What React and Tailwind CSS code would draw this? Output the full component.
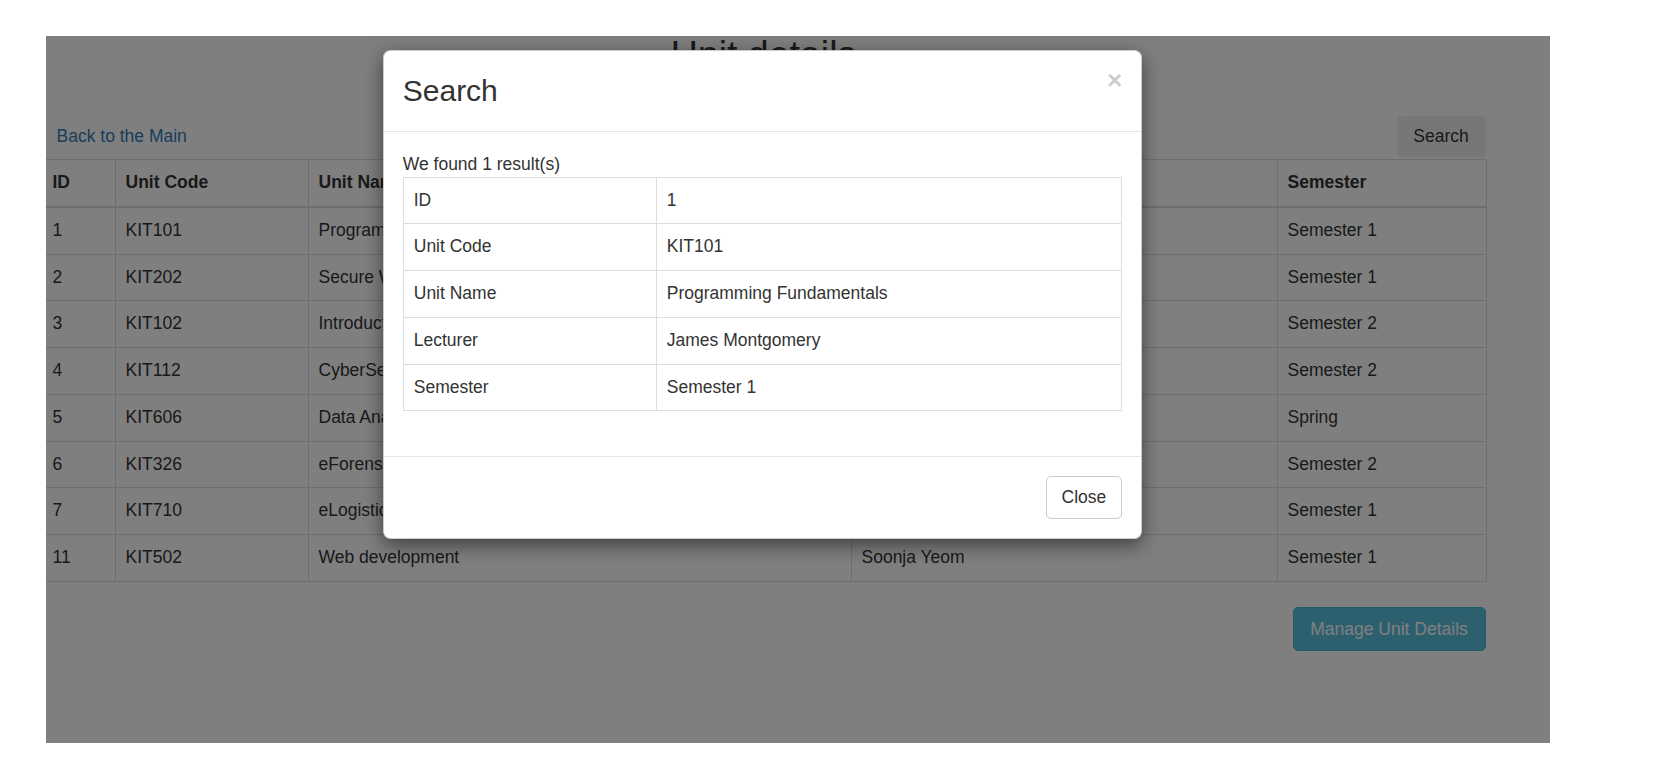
import React from 'react';

const units = [
    { id: 1, code: 'KIT101', name: 'Programming Fundamentals', lecturer: 'James Montgomery', semester: 'Semester 1' },
    { id: 2, code: 'KIT202', name: 'Secure Web Programming', lecturer: 'Soonja Yeom', semester: 'Semester 1' },
    { id: 3, code: 'KIT102', name: 'Introduction to Data Science', lecturer: 'Mira Park', semester: 'Semester 2' },
    { id: 4, code: 'KIT112', name: 'CyberSecurity Fundamentals', lecturer: 'Joel Scanlan', semester: 'Semester 2' },
    { id: 5, code: 'KIT606', name: 'Data Analytics', lecturer: 'Son Tran', semester: 'Spring' },
    { id: 6, code: 'KIT326', name: 'eForensics', lecturer: 'Joel Scanlan', semester: 'Semester 2' },
    { id: 7, code: 'KIT710', name: 'eLogistics', lecturer: 'Jacob Lin', semester: 'Semester 1' },
    { id: 11, code: 'KIT502', name: 'Web development', lecturer: 'Soonja Yeom', semester: 'Semester 1' },
];

const result = [
    ['ID', '1'],
    ['Unit Code', 'KIT101'],
    ['Unit Name', 'Programming Fundamentals'],
    ['Lecturer', 'James Montgomery'],
    ['Semester', 'Semester 1'],
];

const cell = 'border border-[#ddd] px-[10px] py-[10px] text-left align-top leading-[25.75px]';

export default function App() {
    return (
        <div className="min-h-[780px] bg-white pl-[46px] pt-[36px] font-['Liberation_Sans',Arial,sans-serif] text-[17.5px] text-[#333]">
            <div className="relative h-[707px] w-[1504px] overflow-hidden">
                {/* Page under the modal */}
                <div className="-ml-[4.5px] w-[1444px]">
                    <h1 className="-mt-[2px] text-center text-[37.5px] font-normal leading-[41.25px]">Unit details</h1>

                    <div className="mt-[40.75px] flex h-[41px] items-center justify-between">
                        <a className="pl-[15px] leading-[25px] text-[#337ab7]">Back to the Main</a>
                        <button className="h-[41px] w-[89px] rounded-[5px] bg-[#eee] text-[#333]">Search</button>
                    </div>

                    <table className="mt-[2px] w-full table-fixed border-collapse">
                        <thead>
                            <tr>
                                <th className={`${cell} w-[73px] border-b-2 font-bold`}>ID</th>
                                <th className={`${cell} w-[193px] border-b-2 font-bold`}>Unit Code</th>
                                <th className={`${cell} w-[543px] border-b-2 font-bold`}>Unit Name</th>
                                <th className={`${cell} w-[426px] border-b-2 font-bold`}>Lecturer</th>
                                <th className={`${cell} w-[209px] border-b-2 font-bold`}>Semester</th>
                            </tr>
                        </thead>
                        <tbody>
                            {units.map((u) => (
                                <tr key={u.id}>
                                    <td className={cell}>{u.id}</td>
                                    <td className={cell}>{u.code}</td>
                                    <td className={cell}>{u.name}</td>
                                    <td className={cell}>{u.lecturer}</td>
                                    <td className={cell}>{u.semester}</td>
                                </tr>
                            ))}
                        </tbody>
                    </table>

                    <div className="mt-[25px] flex justify-end">
                        <button className="h-[44px] w-[193px] rounded-[5px] border border-[#46b8da] bg-[#5bc0de] text-white">
                            Manage Unit Details
                        </button>
                    </div>
                </div>

                {/* Backdrop */}
                <div className="absolute inset-0 bg-black/50" />

                {/* Search modal */}
                <div className="absolute left-[337px] top-[14px] w-[759px] rounded-[7.5px] border border-black/20 bg-white shadow-[0_6px_19px_rgba(0,0,0,0.5)]">
                    <div className="flex items-start justify-between border-b border-[#e5e5e5] p-[18.75px]">
                        <h3 className="text-[30px] font-normal leading-[42px]">Search</h3>
                        <button className="-mt-[2.5px] text-[26.25px] font-bold leading-none text-black opacity-20">×</button>
                    </div>
                    <div className="px-[18.75px] pb-[20px] pt-[20px]">
                        <p className="leading-[25px]">We found 1 result(s)</p>
                        <table className="mb-[25px] w-full table-fixed border-collapse">
                            <tbody>
                                {result.map(([label, value]) => (
                                    <tr key={label}>
                                        <td className={`${cell} w-[253px]`}>{label}</td>
                                        <td className={cell}>{value}</td>
                                    </tr>
                                ))}
                            </tbody>
                        </table>
                    </div>
                    <div className="flex justify-end border-t border-[#e5e5e5] p-[18.75px]">
                        <button className="h-[43px] rounded-[5px] border border-[#ccc] bg-white px-[15px] leading-[25px] text-[#333]">
                            Close
                        </button>
                    </div>
                </div>
            </div>
        </div>
    );
}
